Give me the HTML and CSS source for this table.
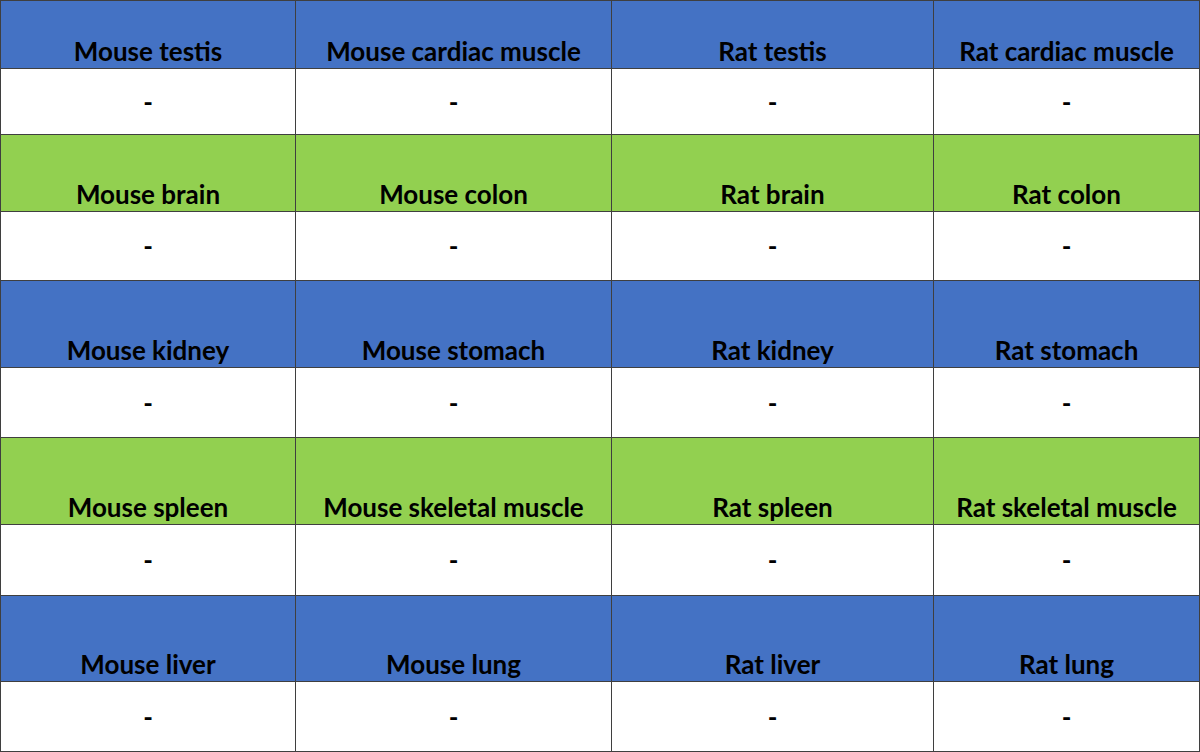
FILE: index.html
```html
<!DOCTYPE html>
<html>
<head>
<meta charset="utf-8">
<link rel="stylesheet" href="styles.css">
</head>
<body>
<table class="grid">
  <colgroup>
    <col class="c1"><col class="c2"><col class="c3"><col class="c4">
  </colgroup>
  <tr class="head blue r1"><td>Mouse testis</td><td>Mouse cardiac muscle</td><td>Rat testis</td><td>Rat cardiac muscle</td></tr>
  <tr class="val v1"><td>-</td><td>-</td><td>-</td><td>-</td></tr>
  <tr class="head green r2"><td>Mouse brain</td><td>Mouse colon</td><td>Rat brain</td><td>Rat colon</td></tr>
  <tr class="val v2"><td>-</td><td>-</td><td>-</td><td>-</td></tr>
  <tr class="head blue r3"><td>Mouse kidney</td><td>Mouse stomach</td><td>Rat kidney</td><td>Rat stomach</td></tr>
  <tr class="val v3"><td>-</td><td>-</td><td>-</td><td>-</td></tr>
  <tr class="head green r4"><td>Mouse spleen</td><td>Mouse skeletal muscle</td><td>Rat spleen</td><td>Rat skeletal muscle</td></tr>
  <tr class="val v4"><td>-</td><td>-</td><td>-</td><td>-</td></tr>
  <tr class="head blue r5"><td>Mouse liver</td><td>Mouse lung</td><td>Rat liver</td><td>Rat lung</td></tr>
  <tr class="val v5"><td>-</td><td>-</td><td>-</td><td>-</td></tr>
</table>
</body>
</html>
```

FILE: styles.css
```css
html, body {
  margin: 0;
  padding: 0;
  background: #ffffff;
}
.grid {
  border-collapse: collapse;
  table-layout: fixed;
  width: 1199px;
  font-family: Lato, "Liberation Sans", sans-serif;
  font-weight: 700;
  font-size: 26px;
  color: #000;
}
.c1 { width: 295px; }
.c2 { width: 316px; }
.c3 { width: 322px; }
.c4 { width: 266px; }
.grid td {
  border: 1px solid #3f3f3f;
  padding: 0;
  text-align: center;
  line-height: 1;
}
.head td {
  vertical-align: bottom;
  padding-bottom: 4px;
}
.val td {
  vertical-align: middle;
}
.blue td { background: #4472c4; }
.green td { background: #92d050; }
.r1 { height: 68px; }
.v1 { height: 66px; }
.r2 { height: 77px; }
.v2 { height: 69px; }
.r3 { height: 87px; }
.v3 { height: 70px; }
.r4 { height: 87px; }
.v4 { height: 71px; }
.r5 { height: 86px; }
.v5 { height: 70px; }
```
